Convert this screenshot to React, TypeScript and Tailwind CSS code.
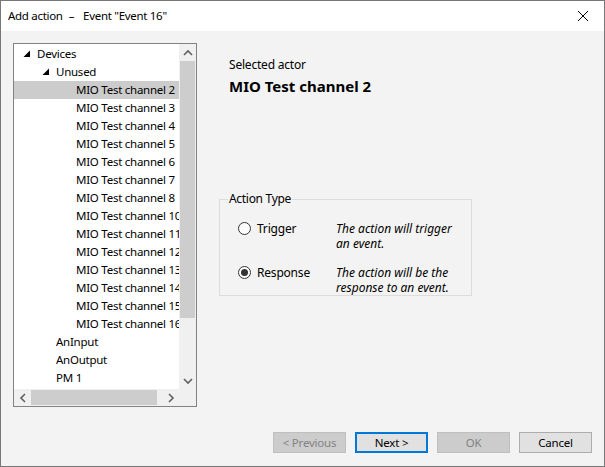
import React from 'react';

const font = { fontFamily: '"Noto Sans", "Open Sans", sans-serif' };

type Row = { label: string; level: number; expanded?: boolean; selected?: boolean };

const rows: Row[] = [
  { label: 'Devices', level: 0, expanded: true },
  { label: 'Unused', level: 1, expanded: true },
  { label: 'MIO Test channel 2', level: 2, selected: true },
  { label: 'MIO Test channel 3', level: 2 },
  { label: 'MIO Test channel 4', level: 2 },
  { label: 'MIO Test channel 5', level: 2 },
  { label: 'MIO Test channel 6', level: 2 },
  { label: 'MIO Test channel 7', level: 2 },
  { label: 'MIO Test channel 8', level: 2 },
  { label: 'MIO Test channel 10', level: 2 },
  { label: 'MIO Test channel 11', level: 2 },
  { label: 'MIO Test channel 12', level: 2 },
  { label: 'MIO Test channel 13', level: 2 },
  { label: 'MIO Test channel 14', level: 2 },
  { label: 'MIO Test channel 15', level: 2 },
  { label: 'MIO Test channel 16', level: 2 },
  { label: 'AnInput', level: 1 },
  { label: 'AnOutput', level: 1 },
  { label: 'PM 1', level: 1 },
];

const Expander = () => (
  <svg width="8" height="8" viewBox="0 0 8 8" className="shrink-0">
    <polygon points="7,0.5 7,7 0.5,7" fill="#000" />
  </svg>
);

const Chevron = ({ dir }: { dir: 'up' | 'down' | 'left' | 'right' }) => {
  const paths = {
    up: 'M1 6 L5 2 L9 6',
    down: 'M1 2 L5 6 L9 2',
    left: 'M6 1 L2 5 L6 9',
    right: 'M2 1 L6 5 L2 9',
  };
  const vertical = dir === 'up' || dir === 'down';
  return (
    <svg width={vertical ? 10 : 8} height={vertical ? 8 : 10} viewBox={vertical ? '0 0 10 8' : '0 0 8 10'}>
      <path d={paths[dir]} fill="none" stroke="#606060" strokeWidth="1.6" />
    </svg>
  );
};

function TreeView() {
  return (
    <div className="w-[184px] h-[364px] border border-[#828282] bg-white flex flex-col shrink-0">
      <div className="flex flex-1 min-h-0">
        <div className="w-[165px] overflow-hidden pt-px">
          {rows.map((r) => {
            const pad = r.level === 0 ? 9 : r.level === 1 ? 28 : 62;
            return (
              <div
                key={r.label}
                className={`h-[18px] flex items-center whitespace-nowrap text-[11.5px] tracking-[-0.25px] text-black ${r.selected ? 'bg-[#cccccc]' : ''}`}
                style={{ paddingLeft: pad }}
              >
                {r.expanded && <Expander />}
                <span className={r.expanded ? 'ml-[6px]' : r.level === 1 ? 'ml-[14px]' : ''}>{r.label}</span>
              </div>
            );
          })}
        </div>
        <div className="w-[17px] bg-[#f0f0f0] flex flex-col">
          <div className="h-[17px] flex items-center justify-center"><Chevron dir="up" /></div>
          <div className="h-[257px] mx-px bg-[#cdcdcd]" />
          <div className="flex-1" />
          <div className="h-[17px] flex items-center justify-center"><Chevron dir="down" /></div>
        </div>
      </div>
      <div className="h-[17px] flex bg-[#f0f0f0]">
        <div className="w-[17px] flex items-center justify-center"><Chevron dir="left" /></div>
        <div className="w-[126px] my-px bg-[#cdcdcd]" />
        <div className="flex-1" />
        <div className="w-[17px] flex items-center justify-center"><Chevron dir="right" /></div>
        <div className="w-[17px]" />
      </div>
    </div>
  );
}

const Radio = ({ checked }: { checked?: boolean }) => (
  <span className="w-[13px] h-[13px] rounded-full border border-[#333] bg-white flex items-center justify-center shrink-0">
    {checked && <span className="w-[7px] h-[7px] rounded-full bg-[#333]" />}
  </span>
);

function Button({ label, disabled, focused }: { label: string; disabled?: boolean; focused?: boolean }) {
  return (
    <div
      className={`w-[73px] h-[21px] flex items-center justify-center text-[11.5px] tracking-[-0.2px] ${
        disabled
          ? 'bg-[#cccccc] border border-[#bfbfbf] text-[#838383]'
          : focused
          ? 'bg-[#e1e1e1] border-2 border-[#0078d7] text-black'
          : 'bg-[#e1e1e1] border border-[#adadad] text-black'
      }`}
    >
      {label}
    </div>
  );
}

export default function App() {
  return (
    <div className="w-[605px] h-[467px] border border-[#777777] flex flex-col text-black" style={font}>
      <div className="h-[30px] bg-white flex items-center pl-[7px] pr-[15px] text-[11.5px] tracking-[-0.3px] shrink-0">
        <span>Add action</span>
        <span className="ml-[6px]">–</span>
        <span className="ml-[9px]">Event "Event 16"</span>
        <svg width="12" height="12" viewBox="0 0 12 12" className="ml-auto">
          <path d="M1 1 L11 11 M11 1 L1 11" stroke="#000" strokeWidth="1" />
        </svg>
      </div>
      <div className="flex-1 bg-[#f3f3f3] flex flex-col">
        <div className="flex flex-1 pl-[12px] pt-[12px]">
          <TreeView />
          <div className="ml-[22px] flex flex-col">
            <div className="pl-[10px] pt-[14px] text-[12px] leading-[16px] tracking-[-0.2px]">Selected actor</div>
            <div className="pl-[10px] pt-[3px] text-[15px] font-bold leading-[20px]">MIO Test channel 2</div>
            <fieldset className="mt-[96px] w-[253px] h-[104px] border border-[#dcdcdc] px-[18px] pt-[15px] m-0">
              <legend className="ml-[-10px] px-[1px] text-[12px] leading-[14px] tracking-[-0.3px]">Action Type</legend>
              <div className="flex text-[12px] leading-[15px]">
                <div className="w-[98px] flex items-center gap-[6px] h-[15px] shrink-0">
                  <Radio />
                  <span className="tracking-[-0.2px]">Trigger</span>
                </div>
                <div className="italic whitespace-nowrap">The action will trigger<br />an event.</div>
              </div>
              <div className="flex text-[12px] leading-[15px] mt-[14px]">
                <div className="w-[98px] flex items-center gap-[6px] h-[15px] shrink-0">
                  <Radio checked />
                  <span className="tracking-[-0.2px]">Response</span>
                </div>
                <div className="italic whitespace-nowrap">The action will be the<br />response to an event.</div>
              </div>
            </fieldset>
          </div>
        </div>
        <div className="flex justify-end gap-[9px] pr-[12px] pb-[13px]">
          <Button label="< Previous" disabled />
          <Button label="Next >" focused />
          <Button label="OK" disabled />
          <Button label="Cancel" />
        </div>
      </div>
    </div>
  );
}
